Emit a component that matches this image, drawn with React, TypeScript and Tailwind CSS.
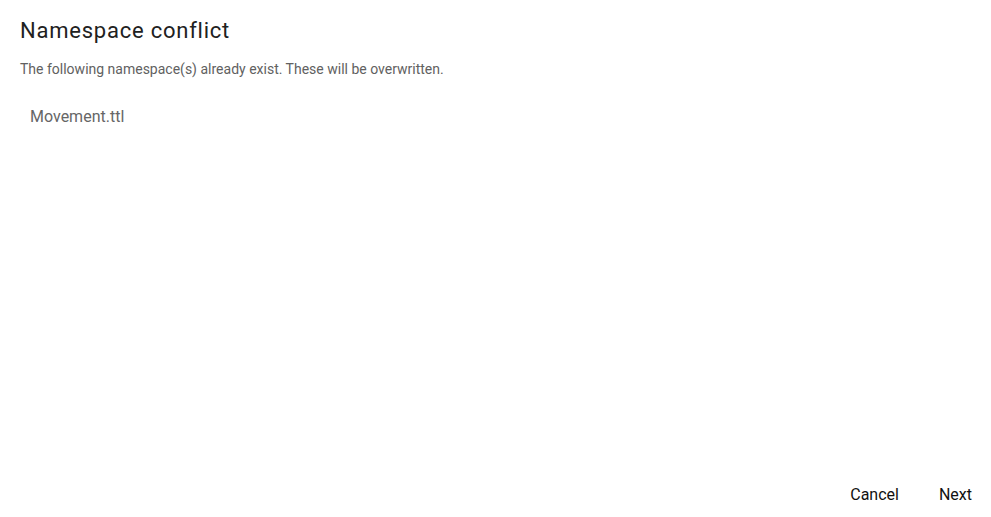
export default function App() {
  return (
    <div
      className="h-[517px] w-full bg-white flex flex-col"
      style={{ fontFamily: 'Roboto, "Liberation Sans", sans-serif' }}
    >
      <div className="px-5 pt-[17px] flex-1">
        <h2 className="text-[22px] leading-[28px] tracking-[0.035em] text-[#212121] font-normal">
          Namespace conflict
        </h2>
        <p className="mt-[14px] text-[14px] leading-[20px] text-[#616161]">
          The following namespace(s) already exist. These will be overwritten.
        </p>
        <ul className="mt-[27px] pl-[10px]">
          <li className="text-[16px] leading-[22px] text-[#666666]">Movement.ttl</li>
        </ul>
      </div>
      <div className="flex justify-end items-center gap-2 pr-[3px] pb-[4px]">
        <button className="px-4 h-9 text-[16px] text-[#111111]">Cancel</button>
        <button className="px-4 h-9 text-[16px] text-[#111111]">Next</button>
      </div>
    </div>
  );
}
